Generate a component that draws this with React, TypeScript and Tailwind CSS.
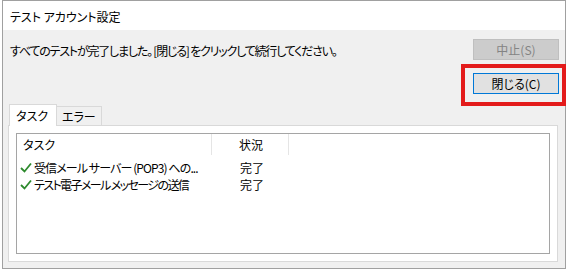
const font = "font-['Noto_Sans_CJK_JP','Noto_Sans',sans-serif] [font-feature-settings:'palt']"

function Check() {
  return (
    <svg width="12" height="11" viewBox="0 0 12 11" className="shrink-0">
      <path d="M1 6 L4.5 9.5 L11 1.5" fill="none" stroke="#2d8a2d" strokeWidth="1.8" />
    </svg>
  )
}

const rows = [
  { task: '受信メール サーバー (POP3) への...', status: '完了', tight: 'tracking-[-0.9px]' },
  { task: 'テスト電子メール メッセージの送信', status: '完了', tight: 'tracking-[-1.6px]' },
]

export default function App() {
  return (
    <div className={`w-[567px] h-[272px] bg-white text-[12px] leading-none text-black ${font}`}>
      <div className="ml-[2px] w-[564px] h-[269px] border border-[#a0a0a0] flex flex-col">
        <div className="h-[29px] bg-white flex items-center pl-[7px] pt-[3px]">
          テスト アカウント設定
        </div>
        <div className="flex-1 bg-[#f0f0f0] pl-[5px] pr-[7px] flex flex-col">
          <div className="flex items-start justify-between mt-[9px]">
            <p className="pl-[2px] mt-[6px] whitespace-nowrap tracking-[-1.2px]">
              すべてのテストが完了しました。 [閉じる] をクリックして続行してください。
            </p>
            <button
              disabled
              className="w-[86px] h-[21px] mr-[-1px] bg-[#cccccc] border border-[#bfbfbf] text-[#838383]"
            >
              中止(S)
            </button>
          </div>
          <div className="flex justify-end mt-[13px]">
            <div className="relative mr-[-1px]">
              <button className="w-[86px] h-[21px] bg-[#e1e1e1] border border-[#0078d7]">閉じる(C)</button>
              <div className="absolute -left-[12px] -right-[7px] -top-[9px] -bottom-[12px] border-[4px] border-[#e31b1b]" />
            </div>
          </div>
          <div className="flex items-end mt-[9px] ml-[1px] h-[22px]">
            <div className="h-[22px] w-[48px] bg-white border border-b-0 border-[#d9d9d9] pl-[6px] pt-[5px] relative z-10 mb-[-1px]">
              タスク
            </div>
            <div className="h-[19px] w-[45px] bg-[#f0f0f0] border border-l-0 border-b-0 border-[#d9d9d9] pl-[5px] pt-[4px]">
              エラー
            </div>
          </div>
          <div className="flex-1 mb-[6px] bg-white border border-[#d9d9d9] p-[7px] flex">
            <div className="flex-1 border border-[#a5a5a5] bg-white">
              <div className="flex h-[21px] items-center">
                <div className="w-[195px] pl-[6px] border-r border-[#e5e5e5] h-full flex items-center">タスク</div>
                <div className="w-[77px] pl-[27px] border-r border-[#e5e5e5] h-full flex items-center">状況</div>
              </div>
              <div className="pt-[4px]">
                {rows.map((r) => (
                  <div key={r.task} className="flex h-[17px] items-center">
                    <div className="w-[195px] pl-[3px] flex items-center gap-[2px] whitespace-nowrap">
                      <Check />
                      <span className={r.tight}>{r.task}</span>
                    </div>
                    <div className="pl-[28px]">{r.status}</div>
                  </div>
                ))}
              </div>
            </div>
          </div>
        </div>
      </div>
    </div>
  )
}
